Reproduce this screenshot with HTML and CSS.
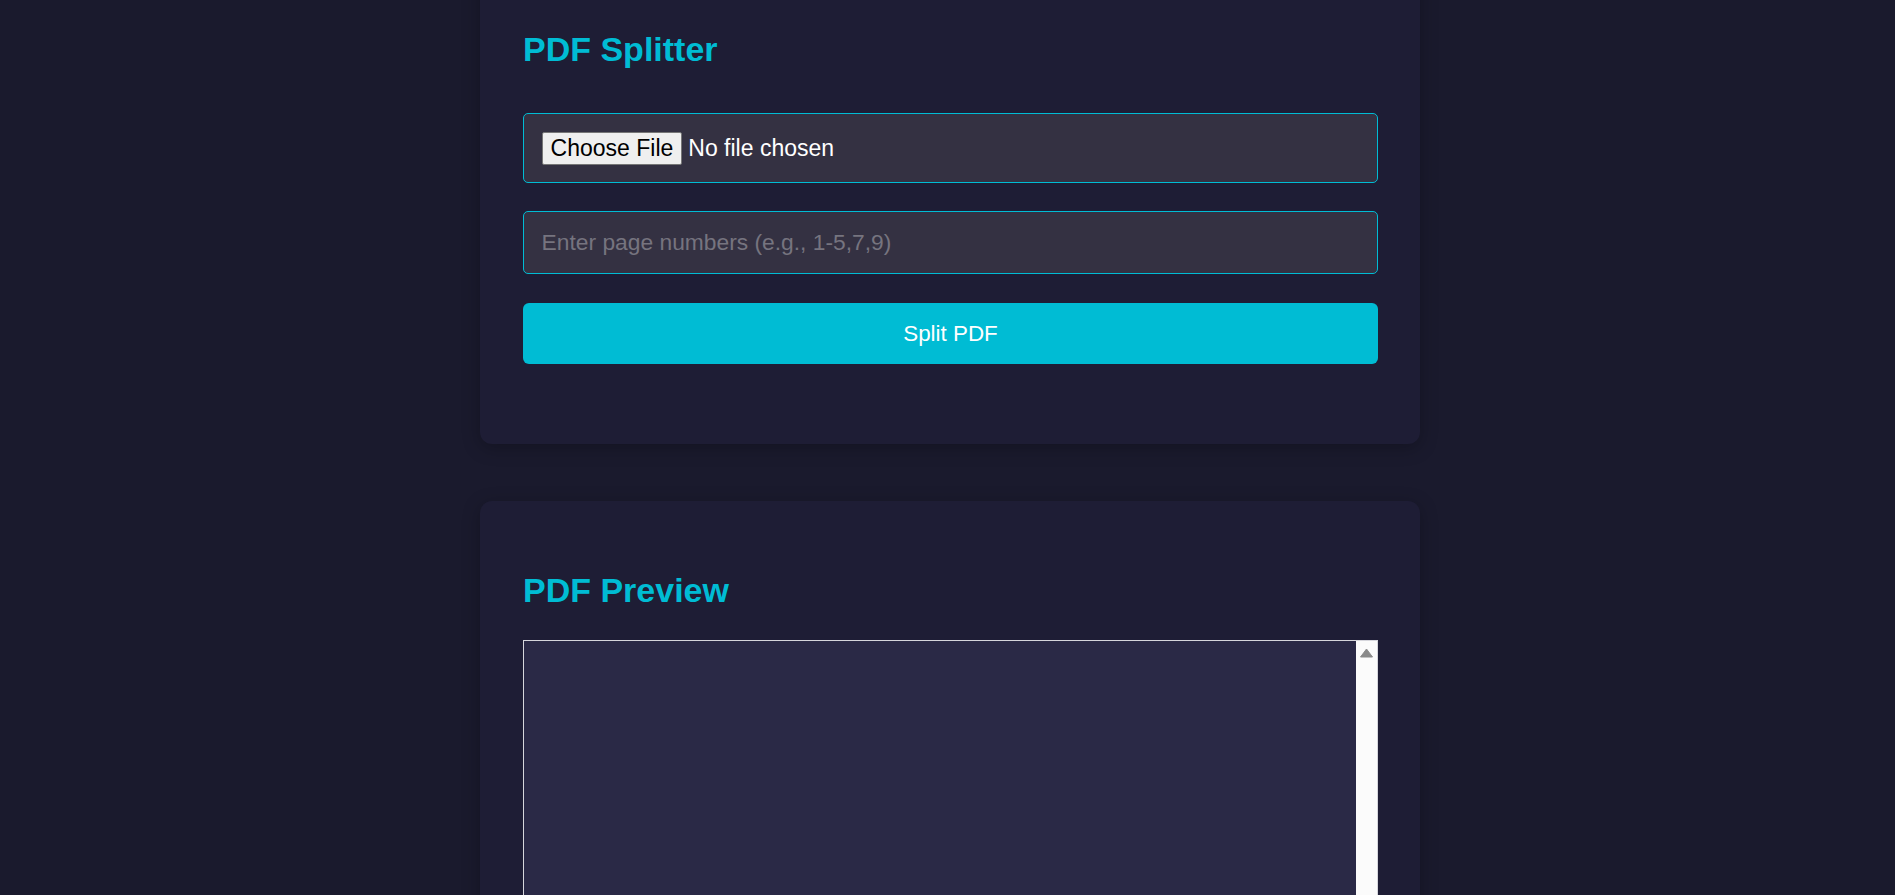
FILE: index.html
```html
<!DOCTYPE html>
<html lang="en">
<head>
<meta charset="utf-8">
<title>PDF Splitter</title>
<link rel="stylesheet" href="styles.css">
</head>
<body>
<main class="page">
  <section class="card card-first">
    <h2 class="card-title">PDF Splitter</h2>
    <form class="split-form">
      <input class="field file-field" type="file" accept="application/pdf">
      <input class="field text-field" type="text" placeholder="Enter page numbers (e.g., 1-5,7,9)">
      <button class="split-btn" type="button">Split PDF</button>
    </form>
  </section>
  <section class="card card-preview">
    <h2 class="card-title preview-title">PDF Preview</h2>
    <div class="preview-frame">
      <div class="preview-content"></div>
      <div class="preview-scrollbar">
        <svg class="scroll-arrow" width="13" height="10" viewBox="0 0 13 10"><path d="M6.5 1 L12.5 9 L0.5 9 Z" fill="#8a8a8a" stroke="#8a8a8a" stroke-width="1" stroke-linejoin="round"/></svg>
      </div>
    </div>
  </section>
</main>
</body>
</html>
```
FILE: styles.css
```css
html, body {
  margin: 0;
  padding: 0;
  background: #1a1a2d;
  overflow: hidden;
}
body {
  font-family: "Liberation Sans", Arial, sans-serif;
  color: #ffffff;
  padding-left: 5px;
}
.page {
  width: 940px;
  margin: -40px auto 0;
  display: flex;
  flex-direction: column;
  gap: 57px;
}
.card {
  background: #1e1d35;
  border-radius: 12px;
  padding: 40px 42px 80px 43px;
  box-shadow: 0 4px 18px rgba(0, 0, 0, 0.25);
}
.card-title {
  margin: 30px 0 44px;
  font-size: 34px;
  font-weight: bold;
  color: #00bcd4;
  line-height: 39px;
}
.split-form {
  display: flex;
  flex-direction: column;
  gap: 28px;
}
.field {
  display: block;
  box-sizing: border-box;
  width: 100%;
  margin: 0;
  padding: 0 17.6px;
  font-family: "Liberation Sans", Arial, sans-serif;
  font-size: 22.8px;
  color: #ffffff;
  background: #343142;
  border: 1px solid #00bcd4;
  border-radius: 5px;
  outline: none;
}
.text-field {
  height: 63px;
}
.file-field {
  height: 70px;
  padding: 17.6px;
  font-size: 23px;
}
.file-field::file-selector-button {
  font-family: "Liberation Sans", Arial, sans-serif;
  font-size: 23px;
  height: 33px;
  padding: 0 8px;
  margin-right: 6px;
  color: #000000;
  background: #efefef;
  border: 1px solid #767676;
  border-radius: 2px;
}
.text-field::placeholder {
  color: #76747f;
}
.split-btn {
  margin-top: 1px;
  height: 61px;
  width: 100%;
  border: none;
  border-radius: 6px;
  background: #00bcd4;
  color: #ffffff;
  font-family: "Liberation Sans", Arial, sans-serif;
  font-size: 22.4px;
  cursor: pointer;
}
.preview-title {
  margin-bottom: 30px;
}
.preview-frame {
  display: flex;
  height: 600px;
  border: 1px solid #d6d6dc;
}
.preview-content {
  flex: 1;
  background: #2a2946;
}
.preview-scrollbar {
  width: 21px;
  background: #fbfbfb;
  padding: 7px 0 0 4px;
  box-sizing: border-box;
}
.scroll-arrow {
  display: block;
}
```
